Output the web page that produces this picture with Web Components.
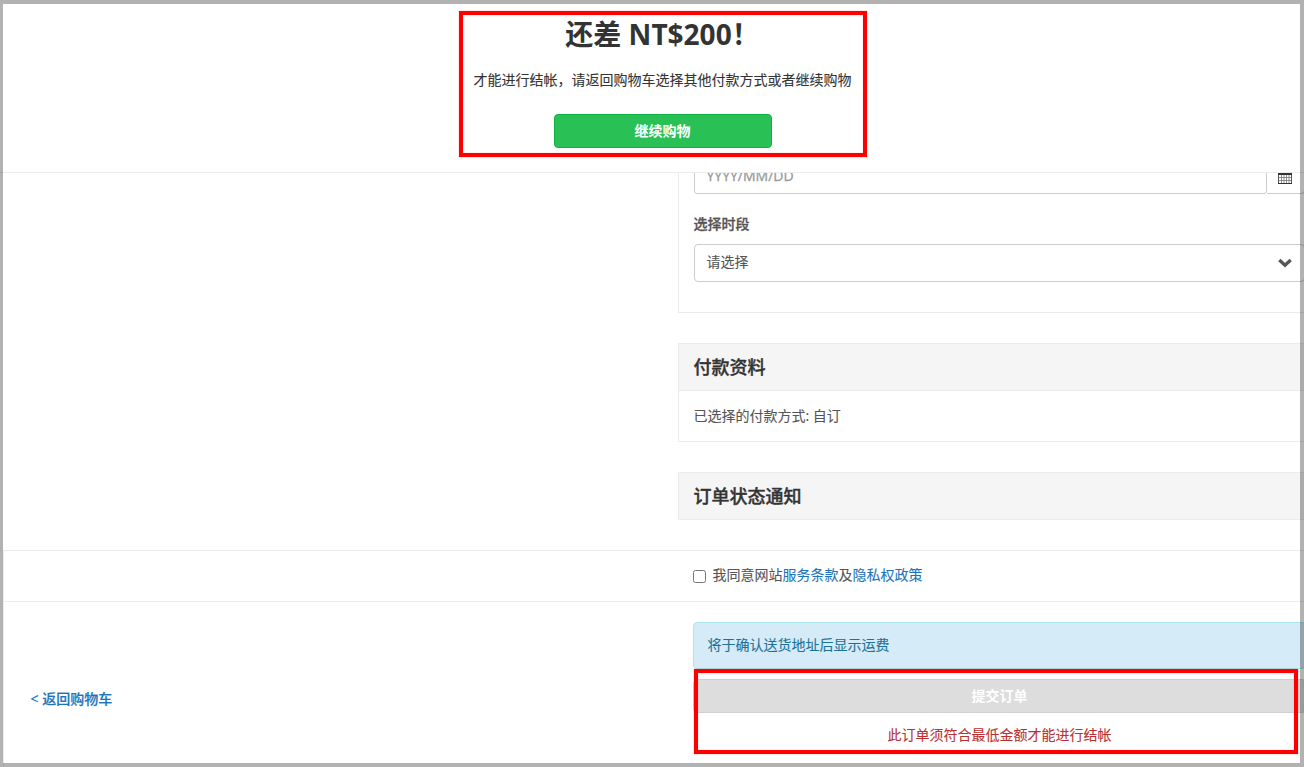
<!DOCTYPE html>
<html lang="zh-CN">
<head>
<meta charset="utf-8">
<title>结帐</title>
<style>
html,body{margin:0;height:100%;overflow:hidden;background:#fff}
body{font:14px/20px "Open Sans","Noto Sans CJK SC",sans-serif;color:#555;-webkit-text-stroke:.1px}
</style>
</head>
<body>
<checkout-page></checkout-page>
<script>
function define(name, html) {
  customElements.define(name, class extends HTMLElement {
    constructor() {
      super();
      this.attachShadow({mode: 'open'}).innerHTML = html;
    }
  });
}

define('callout-box', `
<style>
:host{display:block;position:absolute;box-sizing:border-box;border:4px solid #f00;box-shadow:0 0 1px #ff000080,inset 0 0 1px #ff000080;pointer-events:none;z-index:3}
</style>`);

define('amount-notice', `
<style>
:host{display:block;box-sizing:border-box;height:173px;padding:15px 0 0 21px;border-bottom:1px solid #ebebeb;text-align:center;color:#333;background:#fff}
h1{margin:0;font-size:28px;line-height:38px;font-weight:700;-webkit-text-stroke:0}
p{margin:17px 0 0;line-height:20px}
button{display:block;box-sizing:border-box;width:218px;height:34px;margin:24px auto 0;padding:0;border:1px solid #0fb344;border-radius:4px;background:#29c155;color:#fff;font:700 14px/20px "Open Sans","Noto Sans CJK SC",sans-serif;-webkit-text-stroke:0}
</style>
<h1>还差 NT$200！</h1>
<p>才能进行结帐，请返回购物车选择其他付款方式或者继续购物</p>
<button>继续购物</button>`);

define('info-panel', `
<style>
:host{display:block;box-sizing:border-box;border:1px solid #ebebeb;margin-bottom:30px}
h2{margin:0;padding:0 14.5px;height:46px;line-height:47px;font-size:18px;font-weight:500;color:#333;background:#f5f5f5;-webkit-text-stroke:.35px}
.body{border-top:1px solid #ebebeb;padding:15px 14.5px;line-height:20px}
:host([bare]) .body{display:none}
</style>
<h2><slot name="title"></slot></h2><div class="body"><slot></slot></div>`);

define('date-field', `
<style>
:host{display:flex;height:38px;box-sizing:border-box}
.input{box-sizing:border-box;width:573px;border:1px solid #ccc;border-radius:3px 0 3px 3px;padding:0 11.5px;line-height:38px;color:#999;-webkit-text-stroke:.3px}
.addon{box-sizing:border-box;flex:1;border:1px solid #ccc;border-left:0;border-radius:0 4px 4px 0;padding:13px 0 0 11px}
svg{display:block}
</style>
<div class="input">YYYY/MM/DD</div>
<div class="addon"><svg width="14" height="14" viewBox="0 0 14 14"><path d="M.5 2.5h13v11H.5z" fill="#fff" stroke="#555"/><path d="M0 2h14v3H0z" fill="#333"/><path d="M3.5 5v8M6 5v8M8.5 5v8M11 5v8M1 7.5h12M1 10.5h12" stroke="#777" stroke-width=".8"/><path d="M3.5 0v3M10.5 0v3" stroke="#333"/><path d="M0 13.5h14" stroke="#333"/></svg></div>`);

define('select-field', `
<style>
:host{display:flex;align-items:center;justify-content:space-between;box-sizing:border-box;height:38px;border:1px solid #ccc;border-radius:4px;padding:0 12px 0 11.5px}
span{padding-bottom:2px}
svg{display:block}
</style>
<span><slot></slot></span>
<svg width="14" height="10" viewBox="0 0 14 10"><path d="M1.3 2 7 7.2 12.7 2" fill="none" stroke="#555" stroke-width="3.3"/></svg>`);

define('delivery-panel', `
<style>
:host{display:block;box-sizing:border-box;height:140px;border:1px solid #ebebeb;border-top:0;padding:0 15px;margin-bottom:30px;overflow:hidden}
date-field{margin-top:-17px}
label{display:block;margin:20px 0 10px -.5px;font-weight:500;line-height:20px;-webkit-text-stroke:.3px}
</style>
<date-field></date-field>
<label>选择时段</label>
<select-field>请选择</select-field>`);

define('terms-row', `
<style>
:host{display:flex;align-items:center;box-sizing:border-box;height:52px;padding:0 0 2px 689px;border:solid #ebebeb;border-width:1px 0}
input{width:13px;height:13px;margin:2px 6.5px 0 0}
a{color:#1c74bb}
</style>
<input type="checkbox" aria-label="同意"><span>我同意网站<a>服务条款</a>及<a>隐私权政策</a></span>`);

define('checkout-footer', `
<style>
:host{display:grid;grid-template-columns:689px 613px;height:165px}
.back{margin:87px 0 0 26.5px;height:20px;color:#1c74bb;font-weight:500;-webkit-text-stroke:.2px}
.side{padding-top:20px}
.alert{box-sizing:border-box;height:47px;border:1px solid #ade6ef;border-radius:4px;background:#d5ebf8;color:#1d7396;padding:12px 13.5px}
button{display:block;box-sizing:border-box;width:100%;height:34px;margin-top:10px;padding:0;border:1px solid #d0d0d0;border-radius:4px;background:#ddd;color:#fff;font:700 14px/20px "Open Sans","Noto Sans CJK SC",sans-serif;-webkit-text-stroke:0}
p{margin:12px 0 0;text-align:center;color:#b9312f}
</style>
<a class="back">&lt; 返回购物车</a>
<div class="side"><div class="alert">将于确认送货地址后显示运费</div><button>提交订单</button><p>此订单须符合最低金额才能进行结帐</p></div>`);

define('checkout-page', `
<style>
:host{display:block;position:relative;width:1304px;height:767px;overflow:hidden;background:#fff}
.column{margin-left:678px;width:643px;height:377px}
.bottom{margin-left:3px;border-left:1px solid #ebebeb}
.frame{position:absolute;inset:0;border:solid rgba(0,0,0,.3);border-width:4px 4px 4px 3px;pointer-events:none;z-index:2}
.first{left:459px;top:11px;width:408px;height:146px}
.second{left:694px;top:669px;width:604px;height:85px}
</style>
<amount-notice></amount-notice>
<div class="column">
<delivery-panel></delivery-panel>
<info-panel><span slot="title">付款资料</span>已选择的付款方式: 自订</info-panel>
<info-panel bare><span slot="title">订单状态通知</span></info-panel>
</div>
<div class="bottom"><terms-row></terms-row><checkout-footer></checkout-footer></div>
<div class="frame"></div>
<callout-box class="first"></callout-box>
<callout-box class="second"></callout-box>`);
</script>
</body>
</html>
